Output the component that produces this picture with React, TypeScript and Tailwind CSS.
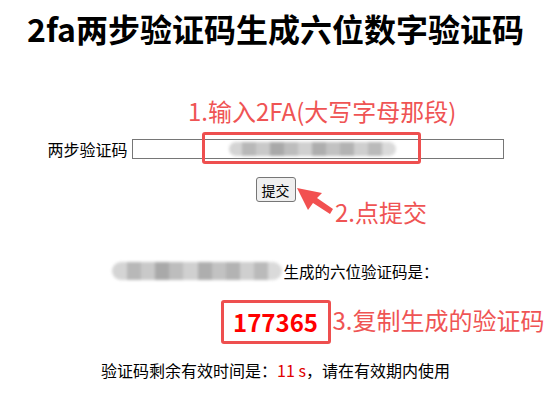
import React from 'react';

const red = 'text-[#ef5454]';

function Blur({ className }: { className: string }) {
  // pixelated blur standing in for the hidden secret
  const shades = ['#d4d4d4', '#b8b8b8', '#c9c9c9', '#a9a9a9', '#bdbdbd', '#d0d0d0', '#aeaeae', '#c2c2c2', '#b3b3b3', '#cfcfcf', '#bababa', '#dadada'];
  return (
    <span className={`inline-flex overflow-hidden rounded-full blur-[1.5px] ${className}`}>
      {shades.map((c, i) => (
        <span key={i} className="h-full flex-1" style={{ background: c }} />
      ))}
    </span>
  );
}

export default function App() {
  return (
    <div className="relative h-[415px] w-[551px] overflow-hidden bg-white font-['Noto_Sans_CJK_SC','Noto_Sans',sans-serif] text-black">
      <div className="flex flex-col items-center">
        <h1 className="mt-[8px] whitespace-nowrap text-[32px] font-bold leading-[40px]">
          2fa两步验证码生成六位数字验证码
        </h1>

        <div className="mt-[91px] flex items-center gap-[4px]">
          <label className="text-[16px] leading-[20px]">两步验证码</label>
          <div className="relative">
            <input
              type="text"
              className="block h-[20px] w-[372px] border border-[#767676] bg-white px-1 text-[13px] outline-none"
            />
            <Blur className="pointer-events-none absolute left-[97px] top-[3px] h-[14px] w-[167px]" />
          </div>
        </div>

        <button
          type="button"
          className="mt-[18px] h-[25px] w-[40px] rounded-[3px] border border-[#767676] bg-[#efefef] text-[14px] leading-[20px]"
        >
          提交
        </button>

        <p className="mt-[59px] flex items-center text-[15.5px] leading-[20px]">
          <Blur className="mr-[1px] h-[18px] w-[170px]" />
          生成的六位验证码是：
        </p>

        <div className="relative mt-[19px]">
          <div className="flex h-[44px] w-[110px] items-center justify-center rounded-[3px] border-[3px] border-[#ee4f4f] text-[24px] font-bold text-[#ff0000]">
            177365
          </div>
          <span className={`absolute left-full top-[2px] ml-[2px] whitespace-nowrap text-[24px] leading-[36px] ${red}`}>
            3.复制生成的验证码
          </span>
        </div>

        <p className="mt-[16px] text-[16px] leading-[20px]">
          验证码剩余有效时间是：<span className="text-[#e00000]">11 s</span>，请在有效期内使用
        </p>
      </div>

      {/* annotations drawn over the page */}
      <span className={`absolute left-[188px] top-[95px] whitespace-nowrap text-[24px] leading-[32px] ${red}`}>
        1.输入2FA(大写字母那段)
      </span>
      <div className="absolute left-[202px] top-[132px] h-[32px] w-[219px] rounded-[3px] border-[3px] border-[#ee4f4f]" />
      <svg className="absolute left-[295px] top-[185px]" width="42" height="32" viewBox="0 0 42 32">
        <path d="M2 3 L27 8 L22 13 L38 24 L35 29 L18 18 L13 25 Z" fill="#f25050" />
      </svg>
      <span className={`absolute left-[335px] top-[196px] whitespace-nowrap text-[24px] leading-[32px] ${red}`}>
        2.点提交
      </span>
    </div>
  );
}
